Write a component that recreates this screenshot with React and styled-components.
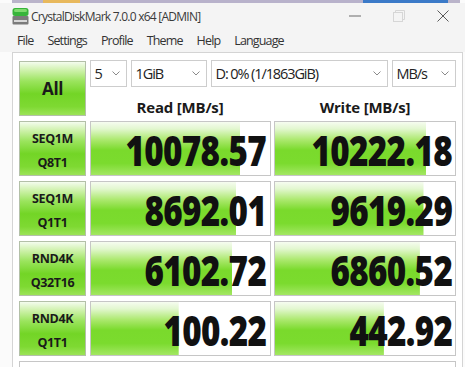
import React from 'react';
import styled, { createGlobalStyle } from 'styled-components';

const Global = createGlobalStyle`
  html, body { margin: 0; padding: 0; background: #fbfbfb; }
  body {
    width: 465px; height: 367px; overflow: hidden;
    font-family: "Open Sans", "Noto Sans", sans-serif; color: #222;
  }
  * { box-sizing: border-box; }
`;

const Strip = styled.div`
  height: 3px;
  margin: 0 5px 0 12px;
  background: linear-gradient(90deg,
    #bab4ca 0, #bab4ca 31px, #e8b95c 31px, #e8b95c 68px,
    #b8b2cb 68px, #b8b2cb 351px, #3b7ac8 351px, #3b7ac8 436px, #bab4ca 436px);
`;

const Window = styled.div`
  background: #f4f4f4;
`;

const TitleBar = styled.div`
  height: 26px;
  display: flex;
  align-items: center;
  padding-left: 12px;
`;

const Title = styled.span`
  margin-left: 2px;
  font-size: 12px;
  letter-spacing: -0.75px;
  color: #3a3a3a;
`;

const Controls = styled.div`
  margin-left: auto;
  display: flex;
  align-items: center;
`;

const CtrlBtn = styled.div`
  width: 44px;
  height: 26px;
  display: flex;
  align-items: center;
  justify-content: center;
`;

const MenuBar = styled.div`
  height: 23px;
  display: flex;
  align-items: center;
  gap: 14px;
  padding-left: 17px;
  font-size: 12.5px;
  letter-spacing: -0.85px;
  color: #333;
`;

const Panel = styled.div`
  margin-left: 12px;
  width: 451px;
  border: 1px solid #d4d4d4;
  border-bottom: none;
  background: #fff;
  padding: 8px 6px 0 6px;
  display: grid;
  grid-template-columns: 67px 181px 182px;
  column-gap: 3.5px;
  row-gap: 5px;
  grid-auto-rows: 55px;
  height: 315px;
  overflow: hidden;
`;

const greenButton = `linear-gradient(180deg,
  #f4fcee 0%, #d3f3b3 14%, #9be45e 36%, #73d526 60%, #7ed932 84%, #9be356 100%)`;

const AllButton = styled.div`
  border: 1px solid #b3c0a8;
  background: ${greenButton};
  display: flex;
  align-items: center;
  justify-content: center;
  font-weight: 700;
  font-size: 17px;
  letter-spacing: -0.4px;
  color: #1a1a1a;
`;

const TopArea = styled.div`
  grid-column: 2 / 4;
  display: grid;
  grid-template-columns: 181px 182px;
  column-gap: 3.5px;
  grid-template-rows: 27px 1fr;
  margin-top: -1px;
`;

const Selects = styled.div`
  grid-column: 1 / 3;
  display: flex;
  gap: 4px;
`;

const Select = styled.div`
  width: ${p => p.$w}px;
  height: 27px;
  border: 1px solid #cdcdcd;
  background: #fff;
  display: flex;
  align-items: center;
  padding: 0 6px 0 4px;
  font-size: 14.5px;
  letter-spacing: -1.1px;
  color: #222;
  white-space: nowrap;
`;

const Chev = styled.svg`
  margin-left: auto;
  flex: none;
`;

const Header = styled.div`
  align-self: end;
  text-align: center;
  font-weight: 700;
  font-size: 15px;
  line-height: 20px;
  letter-spacing: -0.2px;
  margin-bottom: -1px;
  color: #1a1a1a;
`;

const LabelCell = styled.div`
  border: 1px solid #b3c0a8;
  background: ${greenButton};
  display: flex;
  flex-direction: column;
  align-items: center;
  justify-content: center;
  padding-top: 4px;
  font-weight: 700;
  font-size: 12.5px;
  line-height: 24px;
  letter-spacing: -0.35px;
  color: #1a1a1a;
`;

const barGradient = `linear-gradient(180deg,
  #f6fcf0 0%, #e2f7cf 13%, #ade970 33%, #7ada2c 53%, #7bdb2e 78%, #a3e763 100%)`;

const ValueCell = styled.div`
  border: 1px solid #c6c6c6;
  background: ${barGradient} no-repeat, #fff;
  display: flex;
  align-items: center;
  justify-content: flex-end;
  padding-right: 3px;
  padding-top: 2px;
  overflow: hidden;
`;

const Value = styled.span`
  font-size: 42px;
  font-weight: 800;
  line-height: 1;
  letter-spacing: -0.8px;
  color: #111;
  transform: scaleX(0.79);
  transform-origin: right center;
  white-space: nowrap;
`;

const Comment = styled.div`
  grid-column: 1 / -1;
  border: 1px solid #c6c6c6;
  background: #fff;
`;

const Chevron = () => (
  <Chev width="8" height="5" viewBox="0 0 8 5">
    <polyline points="0.5,0.5 4,4 7.5,0.5" fill="none" stroke="#8a8a8a" strokeWidth="1" />
  </Chev>
);

const AppIcon = () => (
  <svg width="17" height="18" viewBox="0 0 17 18">
    <rect x="0.5" y="9" width="16" height="8.5" rx="1" fill="#7b7b7b" />
    <rect x="2" y="13" width="13" height="2" fill="#d8d8d8" />
    <rect x="0.5" y="1" width="16" height="8" rx="2.5" fill="#37b43a" />
    <rect x="2" y="2" width="13" height="3" rx="1.5" fill="#7fdb6e" />
  </svg>
);

const rows = [
  { a: 'SEQ1M', b: 'Q8T1', r: '10078.57', rp: 83.5, w: '10222.18', wp: 84 },
  { a: 'SEQ1M', b: 'Q1T1', r: '8692.01', rp: 81, w: '9619.29', wp: 82.5 },
  { a: 'RND4K', b: 'Q32T16', r: '6102.72', rp: 79, w: '6860.52', wp: 80.5 },
  { a: 'RND4K', b: 'Q1T1', r: '100.22', rp: 49, w: '442.92', wp: 60.5 },
];

export default function App() {
  return (
    <>
      <Global />
      <Strip />
      <Window>
        <TitleBar>
          <AppIcon />
          <Title>CrystalDiskMark 7.0.0 x64 [ADMIN]</Title>
          <Controls>
            <CtrlBtn>
              <svg width="12" height="2" viewBox="0 0 12 2"><line x1="0" y1="1" x2="12" y2="1" stroke="#6a6a6a" strokeWidth="1" /></svg>
            </CtrlBtn>
            <CtrlBtn>
              <svg width="12" height="12" viewBox="0 0 12 12">
                <rect x="0.5" y="2.5" width="9" height="9" fill="none" stroke="#d6d6d6" />
                <path d="M2.5 2.5 V0.5 H11.5 V9.5 H9.5" fill="none" stroke="#d6d6d6" />
              </svg>
            </CtrlBtn>
            <CtrlBtn>
              <svg width="12" height="12" viewBox="0 0 12 12">
                <path d="M0.5 0.5 L11.5 11.5 M11.5 0.5 L0.5 11.5" stroke="#5a5a5a" strokeWidth="1" />
              </svg>
            </CtrlBtn>
          </Controls>
        </TitleBar>
        <MenuBar>
          <span>File</span>
          <span>Settings</span>
          <span>Profile</span>
          <span>Theme</span>
          <span>Help</span>
          <span>Language</span>
        </MenuBar>
      </Window>
      <Panel>
        <AllButton>All</AllButton>
        <TopArea>
          <Selects>
            <Select $w={37}>5<Chevron /></Select>
            <Select $w={76}>1GiB<Chevron /></Select>
            <Select $w={177}>D: 0% (1/1863GiB)<Chevron /></Select>
            <Select $w={64}>MB/s<Chevron /></Select>
          </Selects>
          <Header>Read [MB/s]</Header>
          <Header>Write [MB/s]</Header>
        </TopArea>
        {rows.map((row, i) => (
          <React.Fragment key={i}>
            <LabelCell><span>{row.a}</span><span>{row.b}</span></LabelCell>
            <ValueCell style={{ backgroundSize: `${row.rp}% 100%, auto` }}>
              <Value>{row.r}</Value>
            </ValueCell>
            <ValueCell style={{ backgroundSize: `${row.wp}% 100%, auto` }}>
              <Value>{row.w}</Value>
            </ValueCell>
          </React.Fragment>
        ))}
        <Comment />
      </Panel>
    </>
  );
}
